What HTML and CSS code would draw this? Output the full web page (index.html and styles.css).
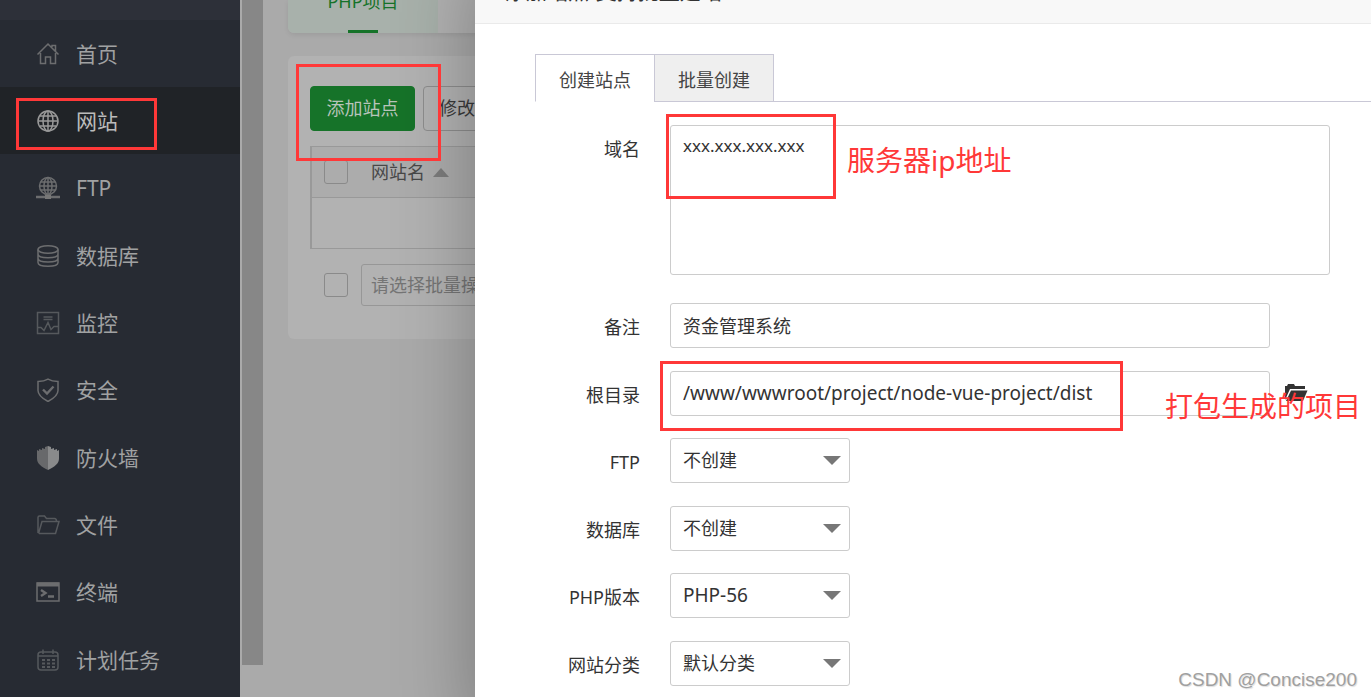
FILE: index.html
```html
<!DOCTYPE html>
<html lang="zh-CN">
<head>
<meta charset="utf-8">
<title>网站</title>
<link rel="stylesheet" href="styles.css">
</head>
<body>
<div class="app">
  <nav class="sidebar">
    <ul class="menu">
      <li><a class="menu-item" href="#"><svg class="icon" viewBox="0 0 24 24"><path d="M1.500 12.500 12 2l10.500 10.500M4.500 11v10.500h5V15h5v6.500h5V11M16 5V3.500h3.500V9"/></svg>首页</a></li>
      <li><a class="menu-item active" href="#"><svg class="icon" viewBox="0 0 24 24"><circle cx="12" cy="12" r="10"/><ellipse cx="12" cy="12" rx="5" ry="10"/><path d="M12 2v20M2 12h20M4 7h16M4 17h16"/></svg>网站</a></li>
      <li><a class="menu-item" href="#"><svg class="icon" viewBox="0 0 24 24"><circle cx="12" cy="10" r="8.500"/><ellipse cx="12" cy="10" rx="4" ry="8.500"/><path d="M12 2v17M4 10h16M5 6h14M5 14h14"/><path class="thick" d="M0 21h24M9 21h6"/><rect class="solid" x="9" y="19" width="6" height="4"/></svg>FTP</a></li>
      <li><a class="menu-item" href="#"><svg class="icon" viewBox="0 0 24 24"><ellipse cx="12" cy="5.500" rx="10" ry="3.800"/><path d="M2 5.500v13c0 5 20 5 20 0v-13M2 10c0 5 20 5 20 0M2 14.300c0 5 20 5 20 0"/></svg>数据库</a></li>
      <li><a class="menu-item" href="#"><svg class="icon dim" viewBox="0 0 24 24"><path d="M1.500 1.500h21v21h-21zM2 16.500h3l3 3 4-8 3 7 3-3h4M7.500 6h9M7.500 8.500h9"/></svg>监控</a></li>
      <li><a class="menu-item" href="#"><svg class="icon" viewBox="0 0 24 24"><path d="M12 1.200c3 1.800 6.500 2.300 10 2.300v9c0 5-4.500 8-10 11-5.500-3-10-6-10-11v-9c3.500 0 7-.5 10-2.300z"/><path class="thick" d="m7 11.500 4 4 6.500-7"/></svg>安全</a></li>
      <li><a class="menu-item" href="#"><svg class="icon" viewBox="0 0 24 24"><path class="half-left" d="M12 0v24C5 20.500 1 17.500 1 12.500V4l2 1V3l3 1V2l3 1V1z"/><path class="half-right" d="M12 0v24c7-3.500 11-6.500 11-11.500V4l-2 1V3l-3 1V2l-3 1V1z"/></svg>防火墙</a></li>
      <li><a class="menu-item" href="#"><svg class="icon dim" viewBox="0 0 24 24"><path d="M2 20V4.500q0-1.500 1.500-1.500h5l2 2.500h8q2 0 2 3M2.500 20.500 6 8.500h17l-3.500 12H3"/></svg>文件</a></li>
      <li><a class="menu-item" href="#"><svg class="icon" viewBox="0 0 24 24"><rect x="1" y="3" width="22" height="18"/><path class="band" d="M1 4.500h22"/><path class="thick" d="m5 10 4.500 3L5 16M12 16.500h6"/></svg>终端</a></li>
      <li><a class="menu-item" href="#"><svg class="icon dim" viewBox="0 0 24 24"><rect x="2" y="4" width="20" height="18" rx="3"/><path d="M2 8h20M7 1.500V6M17 1.500V6"/><path class="dots" d="M6 12h13M6 15.500h13M6 19h13"/></svg>计划任务</a></li>
    </ul>
  </nav>
  <div class="scroll-track"><div class="scroll-thumb"></div></div>
  <main class="main">
    <div class="project-tabs"><a class="project-tab" href="#">PHP项目</a></div>
    <section class="card">
      <div class="toolbar">
        <button class="btn btn-primary" type="button">添加站点</button>
        <button class="btn" type="button">修改默认页</button>
      </div>
      <table class="sites">
        <thead><tr>
          <th class="check-cell"><input class="check" type="checkbox" aria-label="全选"></th>
          <th>网站名<span class="sort"></span></th>
        </tr></thead>
        <tbody><tr><td colspan="2"></td></tr></tbody>
      </table>
      <div class="batch">
        <input class="check" type="checkbox" aria-label="选择全部站点">
        <select class="batch-select" aria-label="批量操作"><option>请选择批量操作</option></select>
      </div>
    </section>
  </main>
</div>

<section class="modal" role="dialog" aria-labelledby="modal-title">
  <h1 class="modal-title" id="modal-title">添加站点-支持批量建站</h1>
  <div class="tabs">
    <button class="tab tab-active" type="button">创建站点</button>
    <button class="tab" type="button">批量创建</button>
  </div>
  <form class="form">
    <div class="row row-domain">
      <label for="domain">域名</label>
      <textarea class="field area" id="domain">xxx.xxx.xxx.xxx</textarea>
    </div>
    <div class="row">
      <label for="note">备注</label>
      <input class="field" id="note" type="text" value="资金管理系统">
    </div>
    <div class="row">
      <label for="root">根目录</label>
      <input class="field latin" id="root" type="text" value="/www/wwwroot/project/node-vue-project/dist">
      <button class="folder" type="button" aria-label="选择目录"><svg viewBox="0 0 24 20"><path d="M1 17V3h2l1-2h6l1 2h10v3H6z"/><path d="M7 7.500h16.500L19 18H2z"/></svg></button>
    </div>
    <div class="row">
      <label for="ftp">FTP</label>
      <div class="select"><select class="field" id="ftp"><option>不创建</option></select></div>
    </div>
    <div class="row">
      <label for="db">数据库</label>
      <div class="select"><select class="field" id="db"><option>不创建</option></select></div>
    </div>
    <div class="row">
      <label for="php">PHP版本</label>
      <div class="select"><select class="field latin" id="php"><option>PHP-56</option></select></div>
    </div>
    <div class="row">
      <label for="type">网站分类</label>
      <div class="select"><select class="field" id="type"><option>默认分类</option></select></div>
    </div>
  </form>
</section>

<div class="mark mark-menu"></div>
<div class="mark mark-add"></div>
<div class="mark mark-domain"></div>
<div class="mark mark-root"></div>
<p class="note note-domain">服务器ip地址</p>
<p class="note note-root">打包生成的项目</p>
<p class="watermark">CSDN @Concise200</p>
</body>
</html>
```
FILE: styles.css
```css
* { box-sizing: border-box; }

body {
  margin: 0;
  height: 100vh;
  position: relative;
  overflow: hidden;
  background: #aaa;
  color: #333;
  font: 18px/24px "Noto Sans", "Noto Sans CJK SC", sans-serif;
}

button, input, select, textarea { font: inherit; color: inherit; }
a { color: inherit; text-decoration: none; }

.app { display: flex; height: 100%; }

/* Sidebar */
.sidebar {
  flex: 0 0 240px;
  padding-top: 20px;
  background: linear-gradient(#2d3039 20px, #272b33 20px);
  overflow: hidden;
}
.menu {
  display: grid;
  grid-auto-rows: 67px 67px 68px;
  margin: 0;
  padding: 0;
  list-style: none;
}
.menu-item {
  display: flex;
  align-items: center;
  gap: 16px;
  height: 100%;
  padding-left: 36px;
  color: #a0a1a2;
  font-size: 21px;
}
.menu-item.active { background: #202327; color: #bbb; }
.icon {
  width: 24px;
  height: 24px;
  fill: none;
  stroke: #6c6d6f;
  stroke-width: 1.5;
}
.active .icon { stroke: #999; }
.icon.dim { stroke: #56595d; }
.icon .thick { stroke-width: 2.4; }
.icon .band { stroke-width: 4; }
.icon .dots { stroke-dasharray: 3 2; stroke-width: 2; }
.icon .solid { fill: #777; stroke: none; }
.icon .half-left { fill: #68696b; stroke: none; }
.icon .half-right { fill: #898a8b; stroke: none; }

.scroll-track { flex: 0 0 23px; padding: 0 0 32px 2px; }
.scroll-thumb { height: 100%; background: #878787; }

/* Site list */
.main { flex: 1; min-width: 0; padding-left: 25px; }
.project-tabs {
  height: 33px;
  display: flex;
  align-items: flex-end;
  background: #b2b2b2;
  border-radius: 0 0 0 6px;
  box-shadow: 0 2px 5px rgba(0, 0, 0, .08);
}
.project-tab {
  width: 150px;
  height: 44px;
  background: linear-gradient(#167329, #167329) center bottom / 30px 3px no-repeat #a8b1ab;
  border-radius: 0 0 0 6px;
  color: #167329;
  text-align: center;
}
.card {
  margin-top: 23px;
  padding: 30px 22px 33px;
  background: #b2b2b2;
  border-radius: 6px;
}
.toolbar { display: flex; gap: 8px; }
.btn {
  height: 45px;
  padding: 0 15px 2px;
  border: 1px solid #8d8d8d;
  border-radius: 4px;
  background: none;
  color: #3a3a3a;
}
.btn-primary { width: 105px; background: #167329; border-color: #167329; color: #b8c4ba; }
.sites {
  width: 100%;
  margin-top: 15px;
  border-collapse: separate;
  border-spacing: 0;
  border: 1px solid #999;
  border-left-width: 2px;
}
.sites th {
  height: 51px;
  padding: 0;
  border-bottom: 1px solid #999;
  background: #acacac;
  color: #484848;
  font-weight: 400;
  text-align: left;
}
.sites .check-cell { width: 59px; padding-left: 12px; }
.sites td { height: 50px; padding: 0; }
.sort {
  display: inline-block;
  margin: 0 0 2px 8px;
  border: 8px solid transparent;
  border-top-width: 0;
  border-bottom: 9px solid #7c7c7c;
}
.check {
  appearance: none;
  display: block;
  width: 24px;
  height: 24px;
  margin: 0;
  border: 1px solid #8a8a8a;
  border-radius: 3px;
}
.batch { display: flex; align-items: center; gap: 13px; margin-top: 15px; padding-left: 14px; }
.batch-select {
  appearance: none;
  width: 200px;
  height: 42px;
  padding: 0 9px;
  border: 1px solid #979797;
  border-radius: 3px;
  background: none;
  color: #757575;
}

/* Dialog */
.modal {
  position: absolute;
  top: -40px;
  right: 0;
  bottom: -40px;
  left: 475px;
  background: #fff;
  box-shadow: 0 0 75px rgba(0, 0, 0, .3);
}
.modal-title {
  margin: 0;
  padding-left: 30px;
  border-bottom: 1px solid #eaeaea;
  background: #f8f8f8;
  font-size: 21px;
  font-weight: 400;
  line-height: 63px;
}
.tabs {
  display: flex;
  height: 48px;
  margin: 30px 0 0 60px;
  background: linear-gradient(#c9c8d6, #c9c8d6) bottom / 100% 1px no-repeat;
}
.tab {
  width: 120px;
  padding: 4px 0 0;
  border: 1px solid #c9c8d6;
  background: #efefef;
  color: #444;
}
.tab-active { border-bottom-color: #fff; border-right: 0; width: 119px; background: #fff; }
.form {
  display: grid;
  grid-template-rows: 178px;
  grid-auto-rows: 68px 67px;
  margin-top: 23px;
}
.row { display: flex; align-items: flex-start; }
.row label {
  flex: 0 0 165px;
  margin-right: 30px;
  padding-top: 12px;
  text-align: right;
}
.field {
  flex: 0 1 600px;
  min-width: 0;
  height: 45px;
  margin: 0;
  padding: 0 12px 2px;
  border: 1px solid #ccc;
  border-radius: 3px;
  background: #fff;
  outline: 0;
}
.field.latin { font-size: 19px; }
.area { flex-basis: 660px; height: 150px; padding: 8px 12px; font-size: 17px; resize: none; }
.folder { margin: 12px 0 0 14px; padding: 0; border: 0; background: none; }
.folder svg { display: block; width: 24px; height: 20px; fill: #333; }
.select { position: relative; flex: 0 0 180px; }
.select .field { appearance: none; width: 100%; display: block; }
.select::after {
  content: "";
  position: absolute;
  top: 18px;
  right: 9px;
  border: 9px solid transparent;
  border-top-color: #777;
  border-bottom-width: 0;
  pointer-events: none;
}

/* Annotations laid over the page */
.mark { position: absolute; border: 3px solid #ff3838; pointer-events: none; }
.mark-menu { left: 16px; top: 98px; width: 141px; height: 52px; }
.mark-add { left: 296px; top: 64px; width: 145px; height: 97px; }
.mark-domain { left: 666px; top: 114px; width: 170px; height: 85px; }
.mark-root { left: 660px; top: 361px; width: 463px; height: 70px; }
.note { position: absolute; margin: 0; color: #ff3838; font-size: 28px; line-height: 40px; white-space: nowrap; }
.note-domain { left: 847px; top: 140px; }
.note-root { left: 1165px; top: 386px; }
.watermark {
  position: absolute;
  right: 14px;
  bottom: 5px;
  margin: 0;
  color: #a0a0a0;
  font: 19px/24px "Liberation Sans", sans-serif;
  text-shadow: 1px 1px 1px #ddd;
}
```
